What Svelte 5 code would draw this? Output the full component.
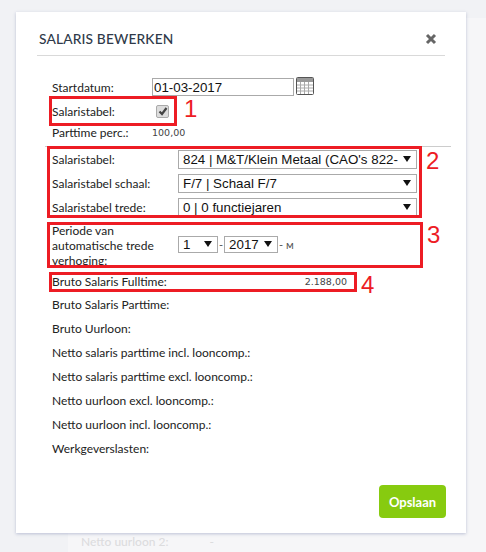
<script>
  const results = [
    "Bruto Salaris Parttime:",
    "Bruto Uurloon:",
    "Netto salaris parttime incl. looncomp.:",
    "Netto salaris parttime excl. looncomp.:",
    "Netto uurloon excl. looncomp.:",
    "Netto uurloon incl. looncomp.:",
    "Werkgeverslasten:",
  ];
  const tableRows = [
    { label: "Salaristabel:", value: "824 | M&T/Klein Metaal (CAO's 822-" },
    { label: "Salaristabel schaal:", value: "F/7 | Schaal F/7" },
    { label: "Salaristabel trede:", value: "0 | 0 functiejaren" },
  ];
</script>

<div class="page">
  <div class="backdrop">
    <div class="behind">
      <span>Netto uurloon 2:</span>
      <span>-</span>
    </div>
  </div>

  <div class="modal">
    <div class="header">
      <h2>SALARIS BEWERKEN</h2>
      <svg class="close" width="12" height="12" viewBox="0 0 12 12">
        <path d="M2 2 L10 10 M10 2 L2 10" stroke="#666" stroke-width="3" />
      </svg>
    </div>

    <div class="form">
      <div class="row top">
        <span class="label">Startdatum:</span>
        <div class="date">01-03-2017</div>
        <svg class="cal" width="18" height="18" viewBox="0 0 18 18">
          <rect x="0.5" y="0.5" width="17" height="17" rx="1" fill="#fff" stroke="#555" />
          <rect x="1" y="1" width="16" height="4" fill="#999" />
          <path d="M1 8h16M1 11h16M1 14h16M4.5 5v12M8.5 5v12M12.5 5v12" stroke="#aaa" stroke-width="1" />
        </svg>
      </div>
      <div class="row check">
        <span class="label">Salaristabel:</span>
        <div class="checkbox">
          <svg width="10" height="10" viewBox="0 0 10 10">
            <path d="M1.5 5.5 L4 8 L8.5 2" fill="none" stroke="#444" stroke-width="2.2" />
          </svg>
        </div>
      </div>
      <div class="row part">
        <span class="label">Parttime perc.:</span>
        <span class="num">100,00</span>
      </div>

      <div class="rule"></div>

      <div class="tables">
        {#each tableRows as row}
          <div class="row sel">
            <span class="label">{row.label}</span>
            <div class="select wide">
              <span>{row.value}</span>
              <i class="arrow"></i>
            </div>
          </div>
        {/each}
      </div>

      <div class="row periode">
        <span class="label">Periode van automatische trede verhoging:</span>
        <div class="select small"><span>1</span><i class="arrow"></i></div>
        <span class="dash">-</span>
        <div class="select year"><span>2017</span><i class="arrow"></i></div>
        <span class="dash">- м</span>
      </div>

      <div class="row full">
        <span class="label">Bruto Salaris Fulltime:</span>
        <span class="num">2.188,00</span>
      </div>

      <div class="results">
        {#each results as text}
          <div class="result">{text}</div>
        {/each}
      </div>
    </div>

    <div class="footer">
      <button>Opslaan</button>
    </div>

    <div class="mark m1"></div>
    <div class="mark m2"></div>
    <div class="mark m3"></div>
    <div class="mark m4"></div>
    <span class="n n1">1</span>
    <span class="n n2">2</span>
    <span class="n n3">3</span>
    <span class="n n4">4</span>
  </div>
</div>

<style>
  :global(body) {
    margin: 0;
  }

  .page {
    position: relative;
    width: 486px;
    height: 552px;
    overflow: hidden;
    background: #f1f2f5;
    font-family: Lato, "Open Sans", sans-serif;
  }

  .backdrop {
    height: 534px;
    margin: 18px 0 0 68px;
    background: #f6f6f8;
    position: relative;
  }

  .behind {
    position: absolute;
    left: 13px;
    top: 516px;
    display: flex;
    gap: 41px;
    font-size: 12px;
    font-weight: 500;
    color: #dcdcde;
  }

  .modal {
    position: absolute;
    left: 16px;
    top: 12px;
    width: 450px;
    height: 521px;
    box-sizing: border-box;
    padding: 0 21px;
    background: #fff;
    box-shadow: 0 1px 3px rgba(120, 130, 170, 0.45);
  }

  .header {
    height: 43px;
    display: flex;
    align-items: center;
    justify-content: space-between;
    padding: 0 8px 0 2px;
    border-bottom: 1px solid #d9d9d9;
  }

  h2 {
    margin: 10px 0 0;
    font-size: 13.75px;
    font-weight: 500;
    letter-spacing: 0.15px;
    color: #2f3a4a;
  }

  .close {
    margin-top: 11px;
  }

  .form {
    padding-left: 15px;
    font-size: 12px;
    color: #222;
  }

  .row {
    display: flex;
    align-items: center;
  }

  .label {
    flex: none;
    width: 100px;
  }

  .top {
    margin-top: 22px;
    height: 18px;
  }

  .date {
    flex: none;
    width: 139px;
    height: 16px;
    border: 1px solid #aaa;
    font: 13.33px/18px "Liberation Sans", sans-serif;
    color: #111;
    padding-left: 1px;
    margin-right: 2px;
  }

  .cal {
    margin-top: -3px;
  }

  .check {
    height: 20px;
    margin-top: 5px;
  }

  .checkbox {
    width: 11px;
    height: 11px;
    margin-left: 4px;
    background: #ddd;
    border: 1px solid #aaa;
    border-radius: 2px;
    display: flex;
    align-items: center;
    justify-content: center;
  }

  .part {
    height: 16px;
    margin-top: 3px;
  }

  .num {
    font: 9.5px "DejaVu Sans", sans-serif;
    color: #444;
  }

  .rule {
    height: 1px;
    background: #ccc;
    margin: 6px -6px 0 -7px;
  }

  .tables {
    display: flex;
    flex-direction: column;
    gap: 6px;
    margin-top: 3px;
  }

  .sel {
    height: 18px;
  }

  .select {
    position: relative;
    flex: none;
    box-sizing: border-box;
    border: 1px solid #aaa;
    font: 13.33px/17px "Liberation Sans", sans-serif;
    color: #111;
    padding-left: 4px;
    white-space: nowrap;
    overflow: hidden;
  }

  .sel .label {
    width: 126px;
  }

  .wide {
    width: 239px;
    height: 19px;
  }

  .arrow {
    position: absolute;
    right: 5px;
    top: 5px;
    width: 0;
    height: 0;
    border-left: 4px solid transparent;
    border-right: 4px solid transparent;
    border-top: 6px solid #111;
  }

  .periode {
    margin-top: 8px;
    height: 45px;
  }

  .periode .label {
    width: 126px;
    line-height: 15px;
    margin-top: -3px;
  }

  .small {
    width: 40px;
    height: 17px;
    margin-top: -4px;
  }

  .year {
    width: 54px;
    height: 17px;
    margin: -4px 0 0 1px;
  }

  .small .arrow,
  .year .arrow {
    top: 4px;
  }

  .small,
  .year {
    line-height: 15px;
  }

  .dash {
    margin: -4px 0 0 1px;
    color: #555;
    font-size: 11px;
  }

  .full {
    margin-top: 3px;
    height: 18px;
    justify-content: space-between;
    width: 295px;
  }

  .full .label {
    width: auto;
  }

  .results {
    margin-top: 3px;
  }

  .result {
    height: 24px;
    line-height: 24px;
    white-space: nowrap;
  }

  .footer {
    position: absolute;
    right: 20px;
    bottom: 15px;
  }

  button {
    width: 67px;
    height: 33px;
    border: none;
    border-radius: 4px;
    background: #87cb0f;
    color: #fff;
    font: 700 13px Lato, sans-serif;
    padding: 0;
  }

  .mark {
    position: absolute;
    box-sizing: border-box;
    border: 3px solid #ed1c24;
    pointer-events: none;
  }

  .m1 {
    left: 33px;
    top: 84px;
    width: 128px;
    height: 30px;
  }

  .m2 {
    left: 31px;
    top: 134px;
    width: 375px;
    height: 72px;
  }

  .m3 {
    left: 31px;
    top: 210px;
    width: 376px;
    height: 46px;
  }

  .m4 {
    left: 33px;
    top: 260px;
    width: 308px;
    height: 20px;
  }

  .n {
    position: absolute;
    font: 24px/24px "Liberation Sans", sans-serif;
    color: #ed1c24;
  }

  .n1 { left: 168px; top: 85px; }
  .n2 { left: 410px; top: 137px; }
  .n3 { left: 411px; top: 211px; }
  .n4 { left: 345px; top: 261px; }
</style>
